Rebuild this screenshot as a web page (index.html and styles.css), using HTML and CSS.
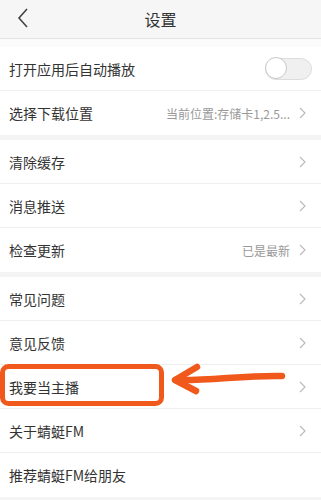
FILE: index.html
```html
<!DOCTYPE html>
<html lang="zh">
<head>
<meta charset="utf-8">
<link rel="stylesheet" href="styles.css">
</head>
<body>
<div class="page">
  <header class="topbar">
    <svg class="back" width="12" height="20" viewBox="0 0 12 20"><path d="M10 1 L2 10 L10 19" fill="none" stroke="#444" stroke-width="1.6"/></svg>
    <div class="title">设置</div>
  </header>
  <div class="spacer"></div>
  <section class="group">
    <div class="row"><span class="label">打开应用后自动播放</span><span class="toggle"><span class="knob"></span></span></div>
    <div class="row"><span class="label">选择下载位置</span><span class="value">当前位置:存储卡1,2.5...</span><svg class="chev" width="7" height="12" viewBox="0 0 7 12"><path d="M1 1 L6 6 L1 11" fill="none" stroke="#bbb" stroke-width="1.2"/></svg></div>
  </section>
  <section class="group">
    <div class="row"><span class="label">清除缓存</span><svg class="chev" width="7" height="12" viewBox="0 0 7 12"><path d="M1 1 L6 6 L1 11" fill="none" stroke="#bbb" stroke-width="1.2"/></svg></div>
    <div class="row"><span class="label">消息推送</span><svg class="chev" width="7" height="12" viewBox="0 0 7 12"><path d="M1 1 L6 6 L1 11" fill="none" stroke="#bbb" stroke-width="1.2"/></svg></div>
    <div class="row"><span class="label">检查更新</span><span class="value">已是最新</span><svg class="chev" width="7" height="12" viewBox="0 0 7 12"><path d="M1 1 L6 6 L1 11" fill="none" stroke="#bbb" stroke-width="1.2"/></svg></div>
  </section>
  <section class="group">
    <div class="row"><span class="label">常见问题</span><svg class="chev" width="7" height="12" viewBox="0 0 7 12"><path d="M1 1 L6 6 L1 11" fill="none" stroke="#bbb" stroke-width="1.2"/></svg></div>
    <div class="row"><span class="label">意见反馈</span><svg class="chev" width="7" height="12" viewBox="0 0 7 12"><path d="M1 1 L6 6 L1 11" fill="none" stroke="#bbb" stroke-width="1.2"/></svg></div>
    <div class="row"><span class="label">我要当主播</span><svg class="chev" width="7" height="12" viewBox="0 0 7 12"><path d="M1 1 L6 6 L1 11" fill="none" stroke="#bbb" stroke-width="1.2"/></svg></div>
    <div class="row"><span class="label">关于蜻蜓FM</span><svg class="chev" width="7" height="12" viewBox="0 0 7 12"><path d="M1 1 L6 6 L1 11" fill="none" stroke="#bbb" stroke-width="1.2"/></svg></div>
    <div class="row"><span class="label">推荐蜻蜓FM给朋友</span></div>
  </section>
  <svg class="annot" width="321" height="500" viewBox="0 0 321 500">
    <rect x="2.5" y="366.5" width="159" height="37" rx="6" fill="none" stroke="#f0581c" stroke-width="5"/>
    <path d="M282 376 C 245 375, 210 381, 176 380" fill="none" stroke="#f0581c" stroke-width="6.5" stroke-linecap="round"/>
    <path d="M197 367 L175 380 L196 391" fill="none" stroke="#f0581c" stroke-width="6.5" stroke-linecap="round" stroke-linejoin="round"/>
  </svg>
</div>
</body>
</html>
```

FILE: styles.css
```css
html, body {
  margin: 0;
  padding: 0;
  background: #f4f4f4;
}
.page {
  position: relative;
  width: 321px;
  height: 500px;
  overflow: hidden;
  font-family: "Noto Sans CJK SC", "Noto Sans", sans-serif;
  color: #333;
}
.topbar {
  height: 38px;
  background: #f6f6f6;
  border-bottom: 1px solid #e4e4e4;
  display: flex;
  align-items: center;
  justify-content: center;
  position: relative;
}
.back {
  position: absolute;
  left: 17px;
  top: 8px;
}
.title {
  font-size: 16px;
  color: #333;
}
.spacer {
  height: 8px;
  background: #fbfbfb;
}
.group {
  background: #fff;
  margin-bottom: 5px;
}
.row {
  height: 43px;
  border-bottom: 1px solid #efefef;
  display: flex;
  align-items: center;
  padding: 0 15px 0 9px;
}
.row:last-child {
  border-bottom: none;
  height: 44px;
}
.label {
  font-size: 14px;
  color: #333;
  flex: 1;
}
.value {
  font-size: 12px;
  color: #999;
  margin-right: 9px;
}
.chev {
  display: block;
  flex: none;
}
.toggle {
  width: 45px;
  height: 20px;
  border-radius: 11px;
  background: #f0f0f0;
  border: 1px solid #ddd;
  position: relative;
  margin-right: -6px;
}
.knob {
  position: absolute;
  left: -1px;
  top: -2px;
  width: 22px;
  height: 22px;
  border-radius: 50%;
  background: #fff;
  border: 1px solid #c8c8c8;
  box-sizing: border-box;
}
.annot {
  position: absolute;
  left: 0;
  top: 0;
  pointer-events: none;
}
```
